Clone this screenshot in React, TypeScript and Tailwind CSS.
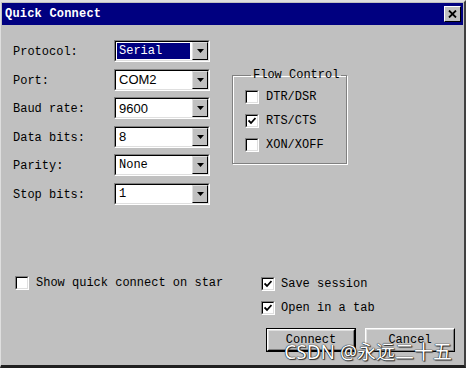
import React from 'react';

const mono = { fontFamily: '"Liberation Mono", "DejaVu Sans Mono", monospace' };

function Combo({ value, selected, sans }: { value: string; selected?: boolean; sans?: boolean }) {
  return (
    <div className="w-[96px] h-[22px] border-t-[#808080] border-l-[#808080] border-b-white border-r-white border">
      <div className="h-full flex border-t-black border-l-black border-b-[#dfdfdf] border-r-[#dfdfdf] border bg-white">
        <div className="flex-1 flex items-center pl-[1px] pr-[2px]">
          <span
            className={
              'h-[16px] flex items-center pl-[2px] text-[12px] leading-none ' +
              (selected ? 'bg-[#000080] text-white w-full' : 'text-black') +
              (sans ? ' font-[Liberation_Sans] text-[13px]' : '')
            }
          >
            {value}
          </span>
        </div>
        <div className="w-[16px] h-full bg-[#c0c0c0] border-t-[#dfdfdf] border-l-[#dfdfdf] border-b-black border-r-black border flex items-center justify-center">
          <svg width="7" height="4" viewBox="0 0 7 4">
            <path d="M0 0h7L3.5 4z" fill="#000" />
          </svg>
        </div>
      </div>
    </div>
  );
}

function Check({ checked }: { checked?: boolean }) {
  return (
    <div className="w-[14px] h-[14px] border border-t-[#808080] border-l-[#808080] border-b-white border-r-white shrink-0">
      <div className="w-full h-full bg-white border border-t-black border-l-black border-b-[#dfdfdf] border-r-[#dfdfdf] flex items-center justify-center">
        {checked && (
          <svg width="8" height="8" viewBox="0 0 8 8">
            <path d="M0.5 3.5L3 6L7.5 1" stroke="#000" strokeWidth="1.8" fill="none" />
          </svg>
        )}
      </div>
    </div>
  );
}

function Button({ label, def }: { label: string; def?: boolean }) {
  return (
    <div className={'w-[90px] h-[24px] ' + (def ? 'border border-black' : '')}>
      <div className="w-full h-full border border-t-white border-l-white border-b-black border-r-black">
        <div className="w-full h-full border border-t-[#dfdfdf] border-l-[#dfdfdf] border-b-[#808080] border-r-[#808080] flex items-center justify-center text-[12px]">
          {label}
        </div>
      </div>
    </div>
  );
}

const rows: { label: string; value: string; selected?: boolean; sans?: boolean }[] = [
  { label: 'Protocol:', value: 'Serial', selected: true },
  { label: 'Port:', value: 'COM2', sans: true },
  { label: 'Baud rate:', value: '9600', sans: true },
  { label: 'Data bits:', value: '8', sans: true },
  { label: 'Parity:', value: 'None' },
  { label: 'Stop bits:', value: '1' },
];

export default function App() {
  return (
    <div className="w-[467px] h-[370px] bg-white overflow-hidden" style={mono}>
      <div className="relative w-[466px] h-[368px] bg-[#c0c0c0] border-t-[2px] border-l border-t-[#dfdfdf] border-l-[#dfdfdf] border-r-[2px] border-b-[3px] border-r-[#404040] border-b-[#202020] text-black">
        {/* title bar */}
        <div className="mt-[1px] mx-[1px] h-[22px] bg-[#000080] flex items-center justify-between pl-[3px] pr-[2px]">
          <span className="text-white text-[12px] font-bold tracking-[0.2px]">Quick Connect</span>
          <div className="w-[17px] h-[16px] bg-[#c0c0c0] border border-t-white border-l-white border-b-black border-r-black flex items-center justify-center">
            <svg width="9" height="8" viewBox="0 0 9 8">
              <path d="M1 0.5L8 7.5M8 0.5L1 7.5" stroke="#000" strokeWidth="1.8" />
            </svg>
          </div>
        </div>

        {/* top section */}
        <div className="flex pl-[12px] pt-[15px]">
          <div className="flex flex-col gap-[6.5px]">
            {rows.map((r) => (
              <div key={r.label} className="flex items-center h-[22px]">
                <span className="w-[101px] text-[12px] pt-[2px]">{r.label}</span>
                <Combo value={r.value} selected={r.selected} sans={r.sans} />
              </div>
            ))}
          </div>

          <fieldset className="ml-[22px] mt-[28px] w-[115px] h-[96px] border border-[#808080] shadow-[1px_1px_0_#fff,inset_1px_1px_0_#fff] pl-[12px]">
            <legend className="ml-[6px] px-[2px] text-[12px] leading-[14px]">Flow Control</legend>
            <div className="flex flex-col gap-[10px] mt-[8px]">
              <label className="flex items-center gap-[7px] text-[12px] h-[14px]">
                <Check /> DTR/DSR
              </label>
              <label className="flex items-center gap-[7px] text-[12px] h-[14px]">
                <Check checked /> RTS/CTS
              </label>
              <label className="flex items-center gap-[7px] text-[12px] h-[14px]">
                <Check /> XON/XOFF
              </label>
            </div>
          </fieldset>
        </div>

        {/* bottom section */}
        <div className="flex justify-between mt-[71px] pl-[14px] pr-[9px]">
          <label className="flex items-start gap-[7px] text-[12px] h-[14px]">
            <Check /> <span className="leading-[14px]">Show quick connect on star</span>
          </label>
          <div className="flex flex-col w-[194px]">
            <label className="flex items-center gap-[6px] text-[12px] h-[14px] mt-[1px]">
              <Check checked /> Save session
            </label>
            <label className="flex items-center gap-[6px] text-[12px] h-[14px] mt-[10px]">
              <Check checked /> Open in a tab
            </label>
            <div className="flex gap-[9px] mt-[13px] ml-[5px]">
              <Button label="Connect" def />
              <Button label="Cancel" />
            </div>
          </div>
        </div>

        {/* watermark */}
        <span className="absolute right-[12px] bottom-[3px] text-[19px] text-white font-[Noto_Sans,Noto_Sans_CJK_SC,sans-serif] leading-none [text-shadow:0_0_1px_#000,0_0_1px_#000,1px_1px_1px_#333]">
          CSDN @永远二十五
        </span>
      </div>
    </div>
  );
}
